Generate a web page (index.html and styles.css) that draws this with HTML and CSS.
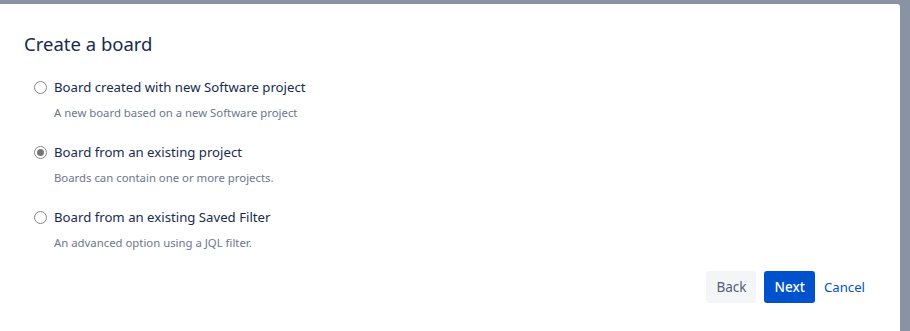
FILE: index.html
```html
<!DOCTYPE html>
<html lang="en">
<head>
    <meta charset="UTF-8">
    <title>Create a board</title>
    <link rel="stylesheet" href="styles.css">
</head>
<body>
    <div class="dialog">
        <h2 class="title">Create a board</h2>

        <div class="choices">
            <label class="choice">
                <span class="choice-row">
                    <input type="radio" name="board" class="radio">
                    <span class="choice-label">Board created with new Software project</span>
                </span>
                <span class="choice-desc">A new board based on a new Software project</span>
            </label>

            <label class="choice">
                <span class="choice-row">
                    <input type="radio" name="board" class="radio" checked>
                    <span class="choice-label">Board from an existing project</span>
                </span>
                <span class="choice-desc">Boards can contain one or more projects.</span>
            </label>

            <label class="choice">
                <span class="choice-row">
                    <input type="radio" name="board" class="radio">
                    <span class="choice-label">Board from an existing Saved Filter</span>
                </span>
                <span class="choice-desc">An advanced option using a JQL filter.</span>
            </label>
        </div>

        <div class="actions">
            <button class="btn btn-back">Back</button>
            <button class="btn btn-next">Next</button>
            <a href="#" class="cancel">Cancel</a>
        </div>
    </div>
</body>
</html>
```

FILE: styles.css
```css
/* Fond gris derrière la boîte */
body {
    margin: 0;
    padding: 4px 10px 0 0;
    background-color: #8993a4;
    font-family: 'Segoe UI', 'Noto Sans', sans-serif;
    color: #172b4d;
    height: 327px;
    overflow: hidden;
}

.dialog {
    background-color: #fff;
    border-radius: 0 3px 0 0;
    height: 340px;
    padding: 20px 24px 0 24px;
    box-sizing: border-box;
}

.title {
    margin: 0;
    font-size: 18.5px;
    font-weight: 400;
    line-height: 40px;
    color: #172b4d;
}

.choices {
    margin-top: 12px;
    padding-left: 9px;
}

.choice {
    display: block;
    margin-bottom: 17px;
}

.choice-row {
    display: flex;
    align-items: center;
    height: 22px;
}

/* Bouton radio gris, style Windows */
.radio {
    appearance: none;
    margin: 0 7px 0 1px;
    width: 13px;
    height: 13px;
    border: 1px solid #858585;
    border-radius: 50%;
    background-color: #fff;
    box-sizing: border-box;
    display: grid;
    place-items: center;
}

.radio:checked::before {
    content: "";
    width: 7px;
    height: 7px;
    border-radius: 50%;
    background-color: #767676;
}

.choice-label {
    font-size: 13.2px;
}

.choice-desc {
    display: block;
    margin-top: 4px;
    padding-left: 21px;
    font-size: 11.35px;
    line-height: 22px;
    color: #6b778c;
}

.actions {
    display: flex;
    justify-content: flex-end;
    align-items: center;
    gap: 8px;
    margin-top: 4px;
    padding-right: 11px;
}

.btn {
    font-family: inherit;
    font-size: 13.5px;
    height: 32px;
    padding: 0 10px;
    border: none;
    border-radius: 3px;
    cursor: pointer;
}

.btn-back {
    background-color: #f4f5f7;
    color: #505f79;
}

.btn-next {
    background-color: #0052cc;
    color: #fff;
    font-weight: 500;
}

.cancel {
    font-size: 13.2px;
    color: #0052cc;
    text-decoration: none;
    margin-left: 1px;
}
```
